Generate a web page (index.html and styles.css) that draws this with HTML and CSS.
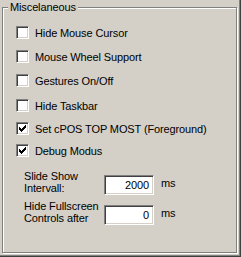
FILE: index.html
```html
<!DOCTYPE html>
<html lang="en">
<head>
  <meta charset="UTF-8" />
  <title>Miscelaneous</title>
  <link rel="stylesheet" href="styles.css">
</head>
<body>
  <div class="window">
    <div class="group">
      <span class="group-title">Miscelaneous</span>

      <div class="options">
        <label class="option"><span class="check"></span><span>Hide Mouse Cursor</span></label>
        <label class="option"><span class="check"></span><span>Mouse Wheel Support</span></label>
        <label class="option"><span class="check"></span><span>Gestures On/Off</span></label>
        <label class="option"><span class="check"></span><span>Hide Taskbar</span></label>
        <label class="option">
          <span class="check checked">
            <svg width="7" height="7" viewBox="0 0 7 7" shape-rendering="crispEdges">
              <path d="M6 0h1v3h-1zM5 1h1v3h-1zM4 2h1v3h-1zM3 3h1v3h-1zM2 4h1v3h-1zM1 3h1v3h-1zM0 2h1v3h-1z" fill="#000"/>
            </svg>
          </span>
          <span>Set cPOS TOP MOST (Foreground)</span>
        </label>
        <label class="option">
          <span class="check checked">
            <svg width="7" height="7" viewBox="0 0 7 7" shape-rendering="crispEdges">
              <path d="M6 0h1v3h-1zM5 1h1v3h-1zM4 2h1v3h-1zM3 3h1v3h-1zM2 4h1v3h-1zM1 3h1v3h-1zM0 2h1v3h-1z" fill="#000"/>
            </svg>
          </span>
          <span>Debug Modus</span>
        </label>
      </div>

      <div class="fields">
        <div class="field">
          <span class="field-label">Slide Show<br>Intervall:</span>
          <span class="textbox">2000</span>
          <span class="unit">ms</span>
        </div>
        <div class="field">
          <span class="field-label">Hide Fullscreen<br>Controls after</span>
          <span class="textbox">0</span>
          <span class="unit">ms</span>
        </div>
      </div>
    </div>
  </div>
</body>
</html>
```

FILE: styles.css
```css
body {
  margin: 0;
  background: #d4d0c8;
  font-family: "Liberation Sans", Arial, sans-serif;
  font-size: 11px;
  letter-spacing: -0.12px;
  color: #000;
}
.window {
  width: 241px;
  height: 257px;
  padding: 7px 0 0 2px;
  box-sizing: border-box;
  background: #d4d0c8;
  border-right: 1px solid #404040;
  border-bottom: 1px solid #404040;
  box-shadow: inset -1px -1px #808080;
}
.group {
  position: relative;
  width: 235px;
  height: 246px;
  box-sizing: border-box;
  border: 1px solid #808080;
  box-shadow: inset 1px 1px #fff, 1px 1px #fff;
}
.group-title {
  position: absolute;
  top: -8px;
  left: 5px;
  padding: 0 2px;
  line-height: 14px;
  background: #d4d0c8;
}
.options {
  display: flex;
  flex-direction: column;
  gap: 11px;
  padding: 18px 0 0 13px;
}
.option {
  display: flex;
  align-items: center;
  height: 13px;
}
.option:nth-child(4) { margin-top: 1px; }
.option:nth-child(5) { margin-top: -1px; }
.option:nth-child(6) { margin-top: -2px; }
.check {
  width: 13px;
  height: 13px;
  box-sizing: border-box;
  display: flex;
  align-items: center;
  justify-content: center;
  background: #fff;
  border: 1px solid;
  border-color: #808080 #fff #fff #808080;
  box-shadow: inset 1px 1px #404040, inset -1px -1px #d4d0c8;
  margin-right: 6px;
}
.check svg { display: block; }
.fields {
  display: flex;
  flex-direction: column;
  gap: 5px;
  padding: 13px 0 0 21px;
}
.field {
  display: flex;
  align-items: flex-start;
}
.field-label {
  width: 80px;
  line-height: 12px;
}
.textbox {
  width: 50px;
  height: 20px;
  box-sizing: border-box;
  margin-top: 5px;
  padding: 0 4px;
  line-height: 18px;
  text-align: right;
  background: #fff;
  border: 1px solid;
  border-color: #808080 #fff #fff #808080;
  box-shadow: inset 1px 1px #404040, inset -1px -1px #d4d0c8;
}
.unit {
  margin: 5px 0 0 7px;
  line-height: 16px;
}
```
